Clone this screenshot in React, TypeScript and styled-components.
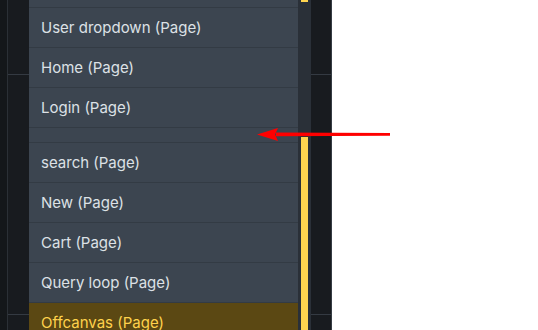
import React from 'react'
import styled, { createGlobalStyle } from 'styled-components'

const GlobalStyle = createGlobalStyle`
    html, body {
        margin: 0;
        padding: 0;
        background: #ffffff;
        font-family: Inter, 'Noto Sans', sans-serif;
    }
`

// first row is scrolled out of view, only its bottom edge shows
const pages = [
    { label: '' },
    { label: 'User dropdown (Page)' },
    { label: 'Home (Page)' },
    { label: 'Login (Page)' },
    { label: '', spacer: true },
    { label: 'search (Page)' },
    { label: 'New (Page)' },
    { label: 'Cart (Page)' },
    { label: 'Query loop (Page)' },
    { label: 'Offcanvas (Page)', active: true },
]

const App = () => {
    return (
        <Page>
            <GlobalStyle />
            <Editor>
                <Gutter />
                <Canvas>
                    <Band $height={74} />
                    <Band $height={239} />
                    <Band $height={40} />
                </Canvas>
                <Dropdown>
                    <List>
                        {pages.map((p, i) => (
                            <Item key={i} $active={p.active} $spacer={p.spacer}>
                                {p.label}
                            </Item>
                        ))}
                    </List>
                    <Track>
                        <Thumb $top={32} $height={2} />
                        <Thumb $top={169} $height={220} />
                    </Track>
                </Dropdown>
            </Editor>
            <Arrow width="140" height="20" viewBox="0 0 140 20">
                <path d="M20 7.6 L134 8 L134 10.8 L20 11.2 Z" fill="#ff0000" />
                <path d="M1 9.4 L22 3 L19 9.4 L22 16 Z" fill="#ff0000" />
            </Arrow>
        </Page>
    )
}

export default App

const Page = styled.div`
    position: relative;
    width: 538px;
    height: 330px;
    overflow: hidden;
    display: flex;
`
const Editor = styled.div`
    position: relative;
    width: 331px;
    height: 330px;
    display: flex;
    background: #181b1f;
    border-right: 1px solid #363c44;
`
const Gutter = styled.div`
    width: 7px;
    background: #14171a;
    border-right: 1px solid #2b3036;
`
const Canvas = styled.div`
    flex: 1;
    display: flex;
    flex-direction: column;
`
const Band = styled.div<{ $height: number }>`
    height: ${(p) => p.$height}px;
    flex: 0 0 auto;
    border-bottom: 1px solid #343a42;
`
const Dropdown = styled.div`
    position: absolute;
    left: 29px;
    top: -32px;
    width: 282px;
    display: flex;
`
const List = styled.div`
    width: 269px;
    background: #3c4550;
    display: flex;
    flex-direction: column;
`
const Item = styled.div<{ $active?: boolean; $spacer?: boolean }>`
    height: ${(p) => (p.$spacer ? 14 : 39)}px;
    padding-left: 12px;
    display: flex;
    align-items: center;
    border-bottom: 1px solid #333b44;
    font-size: 15px;
    color: ${(p) => (p.$active ? '#ffd24c' : '#dde1e6')};
    background: ${(p) => (p.$active ? '#5b4813' : 'transparent')};
    white-space: nowrap;
`
const Track = styled.div`
    position: relative;
    width: 13px;
    background: #2a3038;
`
const Thumb = styled.div<{ $top: number; $height: number }>`
    position: absolute;
    left: 3px;
    top: ${(p) => p.$top}px;
    width: 7px;
    height: ${(p) => p.$height}px;
    background: #ffd54f;
`
const Arrow = styled.svg`
    position: absolute;
    left: 256px;
    top: 125px;
`
